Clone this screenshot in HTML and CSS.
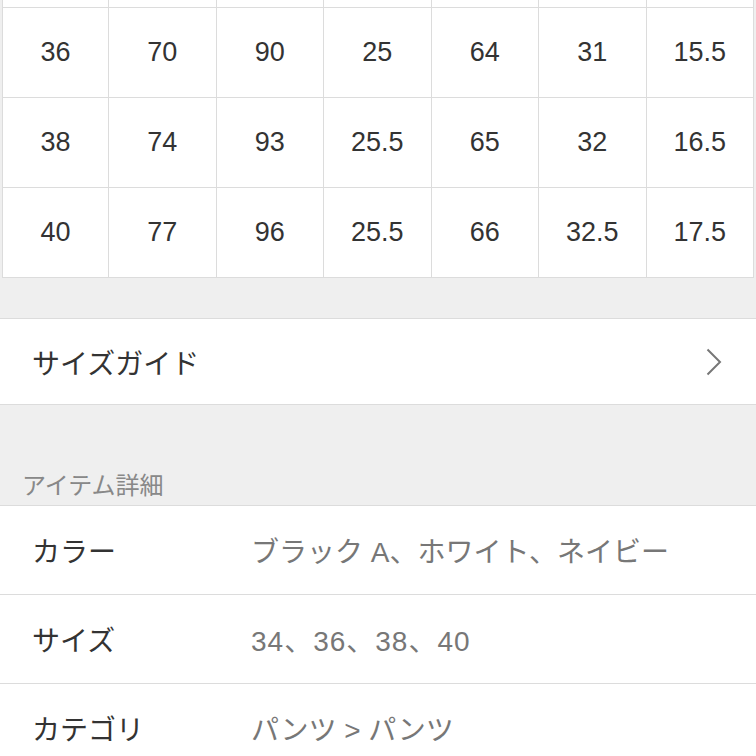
FILE: index.html
```html
<!DOCTYPE html>
<html lang="ja">
<head>
<meta charset="utf-8">
<title>サイズ</title>
<link rel="stylesheet" href="styles.css">
</head>
<body>
<div class="size-table">
  <div class="cell top"></div><div class="cell top"></div><div class="cell top"></div><div class="cell top"></div><div class="cell top"></div><div class="cell top"></div><div class="cell top"></div>
  <div class="cell">36</div><div class="cell">70</div><div class="cell">90</div><div class="cell">25</div><div class="cell">64</div><div class="cell">31</div><div class="cell">15.5</div>
  <div class="cell">38</div><div class="cell">74</div><div class="cell">93</div><div class="cell">25.5</div><div class="cell">65</div><div class="cell">32</div><div class="cell">16.5</div>
  <div class="cell">40</div><div class="cell">77</div><div class="cell">96</div><div class="cell">25.5</div><div class="cell">66</div><div class="cell">32.5</div><div class="cell">17.5</div>
</div>

<div class="spacer"></div>

<div class="link-row">
  <span class="link-text">サイズガイド</span>
  <svg class="chevron" width="16" height="28" viewBox="0 0 16 28"><path d="M1.5 1.5 L14 14 L1.5 26.5" fill="none" stroke="#777" stroke-width="2"/></svg>
</div>

<div class="section-head"><span class="section-title">アイテム詳細</span></div>

<div class="details">
  <div class="detail-row"><span class="label">カラー</span><span class="value">ブラック A、ホワイト、ネイビー</span></div>
  <div class="detail-row"><span class="label">サイズ</span><span class="value wide">34、36、38、40</span></div>
  <div class="detail-row"><span class="label">カテゴリ</span><span class="value">パンツ &gt; パンツ</span></div>
</div>
</body>
</html>
```

FILE: styles.css
```css
html, body {
  margin: 0;
  padding: 0;
}
body {
  background: #efefef;
  font-family: "Liberation Sans", "Noto Sans CJK JP", sans-serif;
  color: #333;
  width: 756px;
  overflow: hidden;
}
.size-table {
  margin-left: 2px;
  width: 751px;
  display: grid;
  grid-template-columns: 106px repeat(6, 1fr);
  background: #fff;
  border-right: 1px solid #dcdcdc;
}
.cell {
  height: 89px;
  border-left: 1px solid #dcdcdc;
  border-bottom: 1px solid #dcdcdc;
  display: flex;
  align-items: center;
  justify-content: center;
  font-size: 27px;
  color: #333;
}
.cell.top {
  height: 7px;
}
.spacer {
  height: 40px;
}
.link-row {
  background: #fff;
  border-top: 1px solid #dcdcdc;
  border-bottom: 1px solid #dcdcdc;
  height: 85px;
  display: flex;
  align-items: center;
  justify-content: space-between;
  padding: 0 34px 0 32px;
}
.link-text {
  font-size: 28px;
  color: #333;
}
.chevron {
  display: block;
}
.section-head {
  height: 100px;
  display: flex;
  align-items: flex-end;
  padding-left: 22px;
}
.section-title {
  font-size: 24px;
  color: #888;
  line-height: 1;
  padding-bottom: 7px;
}
.details {
  background: #fff;
  border-top: 1px solid #dcdcdc;
}
.detail-row {
  height: 88px;
  border-bottom: 1px solid #dcdcdc;
  display: grid;
  grid-template-columns: 219px 1fr;
  align-items: center;
  padding-left: 32px;
}
.label {
  font-size: 28px;
  color: #333;
}
.value {
  font-size: 28px;
  color: #777;
}
.value.wide {
  letter-spacing: 1px;
}
```
